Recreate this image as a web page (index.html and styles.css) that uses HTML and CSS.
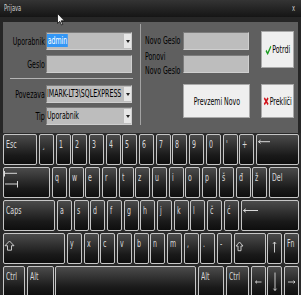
FILE: index.html
```html
<!DOCTYPE html>
<html lang="sl">
<head>
    <meta charset="UTF-8" />
    <title>Prijava</title>
    <link rel="stylesheet" href="styles.css">
</head>
<body>
    <div class="window">
        <div class="titlebar">
            <span class="sq">Prijava</span>
            <span class="sq">x</span>
        </div>

        <!-- kazalec miske -->
        <svg class="cursor" width="8" height="13" viewBox="0 0 8 13">
            <path d="M0.5 0.5 V10.5 L2.8 8.3 L4.5 12 L5.8 11.4 L4.2 7.8 H7.5 Z" fill="#f4f4f4" stroke="#111" stroke-width="0.8" />
        </svg>

        <div class="panel">
            <div class="col-login">
                <div class="row">
                    <div class="lbl"><span class="sq sq-r">Uporabnik</span></div>
                    <div class="field">
                        <span class="val"><span class="sq"><span class="sel">admin</span></span></span>
                        <span class="drop"></span>
                    </div>
                </div>
                <div class="row row-pass">
                    <div class="lbl"><span class="sq sq-r">Geslo</span></div>
                    <div class="field"></div>
                </div>
                <div class="sep"></div>
                <div class="row">
                    <div class="lbl"><span class="sq sq-r">Povezava</span></div>
                    <div class="field">
                        <span class="val"><span class="sq">IMARK-LT3\SQLEXPRESS</span></span>
                        <span class="drop"></span>
                    </div>
                </div>
                <div class="row row-type">
                    <div class="lbl"><span class="sq sq-r">Tip</span></div>
                    <div class="field">
                        <span class="val"><span class="sq">Uporabnik</span></span>
                        <span class="drop"></span>
                    </div>
                </div>
            </div>

            <div class="vsep"></div>

            <div class="col-new">
                <div class="row">
                    <div class="lbl-new"><span class="sq">Novo Geslo</span></div>
                    <div class="field field-new"></div>
                </div>
                <div class="row row-repeat">
                    <div class="lbl-new"><span class="sq">Ponovi</span><br><span class="sq">Novo Geslo</span></div>
                    <div class="field field-new"></div>
                </div>
                <button class="btn btn-new"><span class="sq sq-c">Prevzemi Novo</span></button>
            </div>

            <div class="col-actions">
                <button class="btn btn-ok">
                    <span class="sq sq-c">
                        <svg width="10" height="10" viewBox="0 0 10 10"><path d="M1 5.5 L3.8 8.6 L9 1.2" fill="none" stroke="#1c9e22" stroke-width="1.9" /></svg>Potrdi
                    </span>
                </button>
                <button class="btn btn-cancel">
                    <span class="sq sq-c">
                        <svg width="9" height="10" viewBox="0 0 9 10"><path d="M1.5 2 L7.5 8.5 M7.5 2 L1.5 8.5" fill="none" stroke="#d2141c" stroke-width="2.2" /></svg>Prekliči
                    </span>
                </button>
            </div>
        </div>

        <div class="kbd">
            <div class="krow">
                <div class="key k-esc"><span class="sq">Esc</span></div>
                <div class="key"><span class="sq">¸</span></div>
                <div class="key"><span class="sq">1</span></div>
                <div class="key"><span class="sq">2</span></div>
                <div class="key"><span class="sq">3</span></div>
                <div class="key"><span class="sq">4</span></div>
                <div class="key"><span class="sq">5</span></div>
                <div class="key"><span class="sq">6</span></div>
                <div class="key"><span class="sq">7</span></div>
                <div class="key"><span class="sq">8</span></div>
                <div class="key"><span class="sq">9</span></div>
                <div class="key"><span class="sq">0</span></div>
                <div class="key"><span class="sq">'</span></div>
                <div class="key"><span class="sq">+</span></div>
                <div class="key ico k-fill">
                    <svg width="20" height="20" viewBox="0 0 20 20"><path d="M1.5 6.7 H13 M3.6 5 L1.5 6.7 L3.6 8.4" fill="none" stroke="#d8d8d8" /></svg>
                </div>
            </div>
            <div class="krow">
                <div class="key ico k-tab">
                    <svg width="20" height="24" viewBox="0 0 20 24"><path d="M0.5 5.3 H13 M0.5 3 V8.5 M1 16 H13.5 M13.5 13 V19.5" fill="none" stroke="#d8d8d8" /></svg>
                </div>
                <div class="key"><span class="sq">q</span></div>
                <div class="key"><span class="sq">w</span></div>
                <div class="key"><span class="sq">e</span></div>
                <div class="key"><span class="sq">r</span></div>
                <div class="key"><span class="sq">t</span></div>
                <div class="key"><span class="sq">z</span></div>
                <div class="key"><span class="sq">u</span></div>
                <div class="key"><span class="sq">i</span></div>
                <div class="key"><span class="sq">o</span></div>
                <div class="key"><span class="sq">p</span></div>
                <div class="key"><span class="sq">š</span></div>
                <div class="key"><span class="sq">đ</span></div>
                <div class="key"><span class="sq">ž</span></div>
                <div class="key k-fill"><span class="sq">Del</span></div>
            </div>
            <div class="krow">
                <div class="key k-caps"><span class="sq">Caps</span></div>
                <div class="key"><span class="sq">a</span></div>
                <div class="key"><span class="sq">s</span></div>
                <div class="key"><span class="sq">d</span></div>
                <div class="key"><span class="sq">f</span></div>
                <div class="key"><span class="sq">g</span></div>
                <div class="key"><span class="sq">h</span></div>
                <div class="key"><span class="sq">j</span></div>
                <div class="key"><span class="sq">k</span></div>
                <div class="key"><span class="sq">l</span></div>
                <div class="key"><span class="sq">č</span></div>
                <div class="key"><span class="sq">ć</span></div>
                <div class="key ico k-fill">
                    <svg width="20" height="20" viewBox="0 0 20 20"><path d="M1.5 9.5 H16 M3.8 7.8 L1.5 9.5 L3.8 11.2" fill="none" stroke="#d8d8d8" /></svg>
                </div>
            </div>
            <div class="krow">
                <div class="key ico k-shift">
                    <svg width="12" height="20" viewBox="0 0 12 20"><path d="M5.5 7 L1 11.7 H3.5 V16.2 H7.5 V11.7 H10 Z" fill="none" stroke="#d8d8d8" stroke-width="0.9" /></svg>
                </div>
                <div class="key"><span class="sq">y</span></div>
                <div class="key"><span class="sq">x</span></div>
                <div class="key"><span class="sq">c</span></div>
                <div class="key"><span class="sq">v</span></div>
                <div class="key"><span class="sq">b</span></div>
                <div class="key"><span class="sq">n</span></div>
                <div class="key"><span class="sq">m</span></div>
                <div class="key"><span class="sq">,</span></div>
                <div class="key"><span class="sq">.</span></div>
                <div class="key"><span class="sq">-</span></div>
                <div class="key ico k-rshift">
                    <svg width="12" height="20" viewBox="0 0 12 20"><path d="M4.5 8 L1 12 H3 V16.7 H6 V12 H8 Z" fill="none" stroke="#d8d8d8" stroke-width="0.9" /></svg>
                </div>
                <div class="key ico">
                    <svg width="13" height="29" viewBox="0 0 13 29"><path d="M6.5 8 V18.5 M5 9.8 L6.5 8 L8 9.8" fill="none" stroke="#d8d8d8" stroke-width="0.9" /></svg>
                </div>
                <div class="key k-fill"><span class="sq">Fn</span></div>
            </div>
            <div class="krow">
                <div class="key k-ctrl"><span class="sq">Ctrl</span></div>
                <div class="key k-alt"><span class="sq">Alt</span></div>
                <div class="key k-space"></div>
                <div class="key k-alt2"><span class="sq">Alt</span></div>
                <div class="key k-ctrl2"><span class="sq">Ctrl</span></div>
                <div class="key ico">
                    <svg width="13" height="29" viewBox="0 0 13 29"><path d="M3.5 15 H9.5 M5 13.6 L3.5 15 L5 16.4" fill="none" stroke="#d8d8d8" stroke-width="0.9" /></svg>
                </div>
                <div class="key ico">
                    <svg width="13" height="29" viewBox="0 0 13 29"><path d="M7 5.5 V23.5 M5.5 21.7 L7 23.5 L8.5 21.7" fill="none" stroke="#d8d8d8" stroke-width="0.9" /></svg>
                </div>
                <div class="key ico k-fill">
                    <svg width="13" height="29" viewBox="0 0 13 29"><path d="M3 15 H10 M8.5 13.6 L10 15 L8.5 16.4" fill="none" stroke="#d8d8d8" stroke-width="0.9" /></svg>
                </div>
            </div>
        </div>
    </div>
</body>
</html>
```

FILE: styles.css
```css
* {
    box-sizing: border-box;
}

body {
    margin: 0;
    background-color: #1e1e1e;
    font-family: "DejaVu Sans Condensed", "DejaVu Sans", sans-serif;
    font-size: 11px;
}

.window {
    position: relative;
    width: 301px;
    height: 295px;
    overflow: hidden;
    background: #262626;
}

/* ozek zapis besedila, kot na zaslonu tablice */
.sq {
    display: inline-block;
    white-space: nowrap;
    transform: scaleX(0.63);
    transform-origin: left center;
}

    .sq-r {
        transform-origin: right center;
    }

    .sq-c {
        transform-origin: center center;
        display: inline-flex;
        align-items: center;
    }

.titlebar {
    height: 17px;
    padding: 0 4px 1px 4px;
    display: flex;
    justify-content: space-between;
    align-items: center;
    background: linear-gradient(#343434, #151515);
    color: #cfcfcf;
    font-size: 9px;
}

.cursor {
    position: absolute;
    left: 57px;
    top: 13px;
}

.panel {
    margin: 5px 3px 0 3px;
    height: 111px;
    display: flex;
    background: #5f5f5f;
    color: #000;
}

.col-login {
    width: 137px;
    padding-top: 10px;
}

.row {
    display: flex;
    align-items: center;
    height: 18px;
}

.row-pass {
    margin-top: 5px;
}

.row-type {
    margin-top: 4px;
}

.sep {
    width: 123px;
    height: 1px;
    margin: 5px 0 6px 7px;
    background: #b4b4b4;
}

.lbl {
    width: 42px;
    display: flex;
    justify-content: flex-end;
}

.field {
    width: 86px;
    height: 18px;
    margin-left: 1px;
    display: flex;
    align-items: stretch;
    background: #bdbdbd;
    border: 1px solid;
    border-color: #7c7c7c #cfcfcf #cfcfcf #7c7c7c;
    overflow: hidden;
}

.val {
    flex: 1;
    min-width: 0;
    overflow: hidden;
    line-height: 14px;
    padding-top: 1px;
}

.sel {
    background: #3296f5;
    color: #fff;
    padding: 0 1px;
}

.drop {
    width: 7px;
    flex: none;
    margin: 1px 0;
    background: #e6e6e6;
    display: flex;
    align-items: center;
    justify-content: center;
}

    .drop::after {
        content: "";
        border-left: 2px solid transparent;
        border-right: 2px solid transparent;
        border-top: 3px solid #222;
    }

.vsep {
    width: 1px;
    margin: 2px 0 8px 0;
    background: #a3a3a3;
}

.col-new {
    width: 111px;
    padding: 10px 0 0 4px;
}

.lbl-new {
    width: 38px;
    line-height: 14px;
}

.field-new {
    width: 66px;
    margin-left: 0;
}

.row-repeat {
    height: auto;
}

.btn {
    display: flex;
    align-items: center;
    justify-content: center;
    padding: 0;
    background: #efefef;
    border: 1px solid #a9a9a9;
    font-family: inherit;
    font-size: 11px;
    color: #000;
    overflow: hidden;
}

    .btn svg {
        margin-right: 1px;
    }

.btn-new {
    width: 67px;
    height: 34px;
    margin: 6px 0 0 38px;
}

.col-actions {
    width: 33px;
    margin-left: 9px;
    padding-top: 9px;
}

.btn-ok {
    width: 33px;
    height: 37px;
}

.btn-cancel {
    width: 33px;
    height: 34px;
    margin-top: 16px;
}

/* tipkovnica */
.kbd {
    height: 162px;
    padding: 1px 2px 0 3px;
    display: flex;
    flex-direction: column;
    gap: 2px;
    background: #2a2a2a;
}

.krow {
    display: flex;
    gap: 1.7px;
    height: 31px;
    flex: none;
}

.key {
    width: 15px;
    flex: none;
    padding: 3px 0 0 2px;
    line-height: 13px;
    color: #dadada;
    background: linear-gradient(#4b4b4b, #1a1a1a 70%, #0e0e0e);
    border: 1px solid #c6c6c6;
    border-radius: 2px;
    overflow: hidden;
}

    .key.ico {
        padding: 0;
    }

    .key svg {
        display: block;
    }

.k-esc { width: 34.3px; }
.k-tab { width: 47.3px; }
.k-caps { width: 52.3px; }
.k-shift { width: 62.3px; }
.k-rshift { width: 31.7px; }
.k-ctrl { width: 22.3px; }
.k-alt { width: 26.7px; }
.k-space { width: 141px; }
.k-alt2 { width: 26.3px; }
.k-ctrl2 { width: 22.9px; }

.k-fill {
    flex: 1;
    width: auto;
}
```
